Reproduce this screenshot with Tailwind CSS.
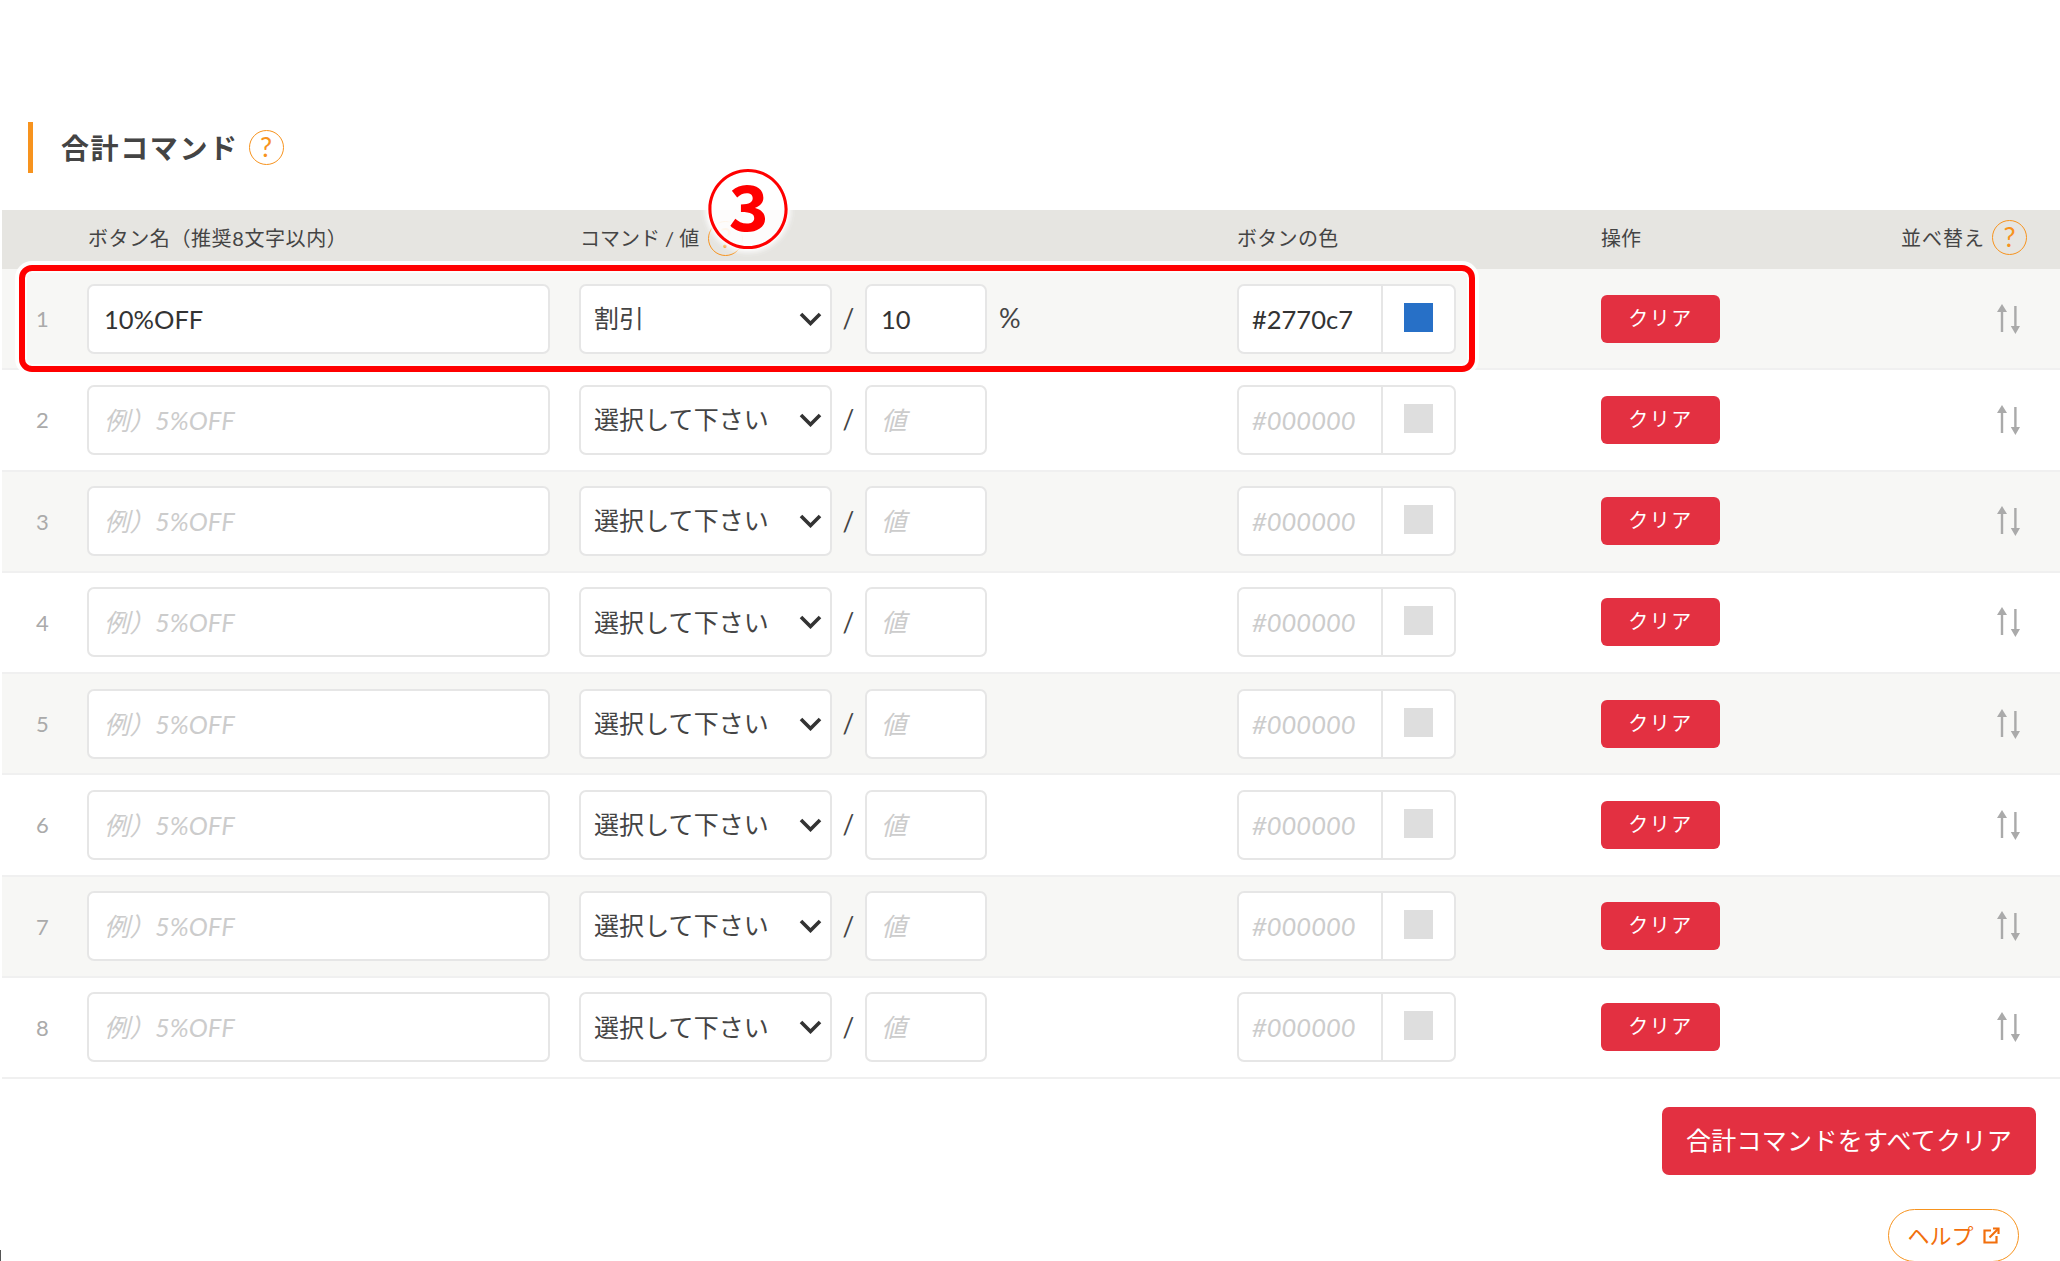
<!DOCTYPE html>
<html lang="ja">
<head>
    <meta charset="UTF-8">
    <title>合計コマンド</title>
    <script src="https://cdn.jsdelivr.net/npm/@tailwindcss/browser@4"></script>
</head>
<body class="relative h-[1261px] overflow-hidden bg-white text-[#444] font-[family-name:Lato,'Noto_Sans_CJK_JP',sans-serif]">
    <div class="pt-[122px]">
        <!-- タイトル -->
        <div class="ml-[28px] h-[51px] border-l-[5px] border-[#f7931e] pl-[28px] flex items-center gap-[10px]">
            <h2 class="text-[28px] font-bold tracking-[1.6px] text-[#444]">合計コマンド</h2>
            <span class="w-[35px] h-[35px] rounded-full border border-[#f7931e] text-[#f7931e] text-[27px] flex items-center justify-center">?</span>
        </div>

        <!-- ヘッダー -->
        <div class="mt-[37px] ml-[2px] h-[59px] pb-[3px] bg-[#e6e5e1] flex items-center text-[20px] relative">
            <div class="w-[86px]"></div>
            <div class="w-[492px] tracking-[0.6px]">ボタン名（推奨8文字以内）</div>
            <div class="w-[657px] flex items-center gap-[9px]">
                <span>コマンド / 値</span>
                <span class="w-[35px] h-[35px] rounded-full border border-[#f7931e] text-[#f7931e] text-[27px] flex items-center justify-center">?</span>
            </div>
            <div class="w-[364px] tracking-[0.3px]">ボタンの色</div>
            <div>操作</div>
            <div class="absolute right-[33px] top-[10px] flex items-center gap-[7px]">
                <span class="tracking-[1px]">並べ替え</span>
                <span class="w-[35px] h-[35px] rounded-full border border-[#f7931e] text-[#f7931e] text-[27px] flex items-center justify-center">?</span>
            </div>
        </div>

        <!-- 行はここに入る -->
        <div id="rows" class="ml-[2px]"></div>

        <div class="flex justify-end pr-[24px] mt-[28px]">
            <button class="w-[374px] h-[68px] rounded-[7px] bg-[#e33041] text-white text-[25px] tracking-[0.3px]">合計コマンドをすべてクリア</button>
        </div>
        <div class="flex justify-end pr-[41px] mt-[34px]">
            <a class="w-[131px] h-[53px] rounded-full border border-[#f7931e] text-[#f26f0c] text-[22px] flex items-center justify-center gap-[9px]">
                ヘルプ
                <svg width="17" height="17" viewBox="0 0 17 17" fill="none" stroke="#f26f0c" stroke-width="2.2">
                    <path d="M8 3.5H1.5V15.5H13.5V9"/>
                    <path d="M6.5 10.5L15 2"/>
                    <path d="M10 1.5H15.5V7"/>
                </svg>
            </a>
        </div>
    </div>

    <!-- 赤枠と番号 -->
    <div class="absolute left-[19px] top-[265px] w-[1456px] h-[107px] rounded-[13px] border-[6px] border-[#ff0000] shadow-[0_0_0_4px_rgba(255,255,255,0.9),inset_0_0_0_2px_rgba(255,255,255,0.7)]"></div>
    <div class="absolute left-[711px] top-[174px] w-[72px] h-[72px] rounded-full bg-white/90"></div>
    <div class="absolute left-[703px] top-[145px] w-[90px] h-[120px] flex items-center justify-center text-[#ff0000] text-[84px] font-bold leading-none font-[family-name:'Noto_Sans_CJK_JP',sans-serif] [text-shadow:0_0_10px_white,0_0_10px_white,0_0_6px_white,0_0_6px_white,0_0_3px_white,0_0_3px_white]">③</div>

    <div class="absolute left-0 top-[1250px] w-px h-[11px] bg-[#555]"></div>

    <script>
        // 行を8つ作る
        const rows = document.getElementById('rows');
        for (let i = 1; i <= 8; i++) {
            const first = i === 1;
            const bg = i % 2 === 1 ? 'bg-[#f7f7f5]' : 'bg-white';
            const swatch = first ? 'bg-[#2770c7]' : 'bg-[#dedede]';
            rows.innerHTML += `
            <div class="${bg} h-[101.25px] border-b-2 border-[#f0f0f0] flex items-center">
                <div class="w-[85px] pr-[4px] text-center text-[22px] text-[#aaa]">${i}</div>
                <input value="${first ? '10%OFF' : ''}" placeholder="例）5%OFF" class="w-[463px] h-[70px] px-[15px] bg-white border-2 border-[#e6e6e6] rounded-[7px] text-[25.5px] text-[#333] placeholder:italic placeholder:text-[#ccc]">
                <div class="relative ml-[29px] w-[253px] h-[70px]">
                    <select class="appearance-none w-full h-full px-[13px] bg-white border-2 border-[#e6e6e6] rounded-[7px] text-[25px] tracking-[0.1px] text-[#444]">
                        <option>${first ? '割引' : '選択して下さい'}</option>
                    </select>
                    <svg class="absolute right-[10px] top-[28px]" width="23" height="14" viewBox="0 0 23 14" fill="none" stroke="#333" stroke-width="3.6"><path d="M2 2L11.5 11.5L21 2"/></svg>
                </div>
                <div class="w-[33px] text-center text-[26px]">/</div>
                <div class="w-[372px] flex items-center">
                    <input value="${first ? '10' : ''}" placeholder="値" class="w-[122px] h-[70px] px-[14px] bg-white border-2 border-[#e6e6e6] rounded-[7px] text-[25.5px] text-[#333] placeholder:italic placeholder:text-[#ccc]">
                    <span class="ml-[12px] text-[27px] ${first ? '' : 'hidden'}">%</span>
                </div>
                <div class="w-[219px] h-[70px] flex bg-white border-2 border-[#e6e6e6] rounded-[7px]">
                    <input value="${first ? '#2770c7' : ''}" placeholder="#000000" class="w-[144px] h-full pl-[13px] text-[25.5px] text-[#333] placeholder:italic placeholder:text-[#ccc] border-r-2 border-[#e6e6e6]">
                    <div class="flex-1 flex items-center justify-center pb-[3px]">
                        <div class="w-[29px] h-[29px] ${swatch}"></div>
                    </div>
                </div>
                <button class="ml-[145px] w-[119px] h-[48px] pb-[2px] rounded-[6px] bg-[#e33041] text-white text-[20px] tracking-[1.5px]">クリア</button>
                <svg class="ml-[277px]" width="23" height="30" viewBox="0 0 23 30" fill="#aaa">
                    <path d="M5 0L10 8H6.2V28H3.8V8H0Z"/>
                    <path d="M17.2 2H19.6V22H23L18.4 30L13.8 22H17.2Z"/>
                </svg>
            </div>`;
        }
    </script>
</body>
</html>
